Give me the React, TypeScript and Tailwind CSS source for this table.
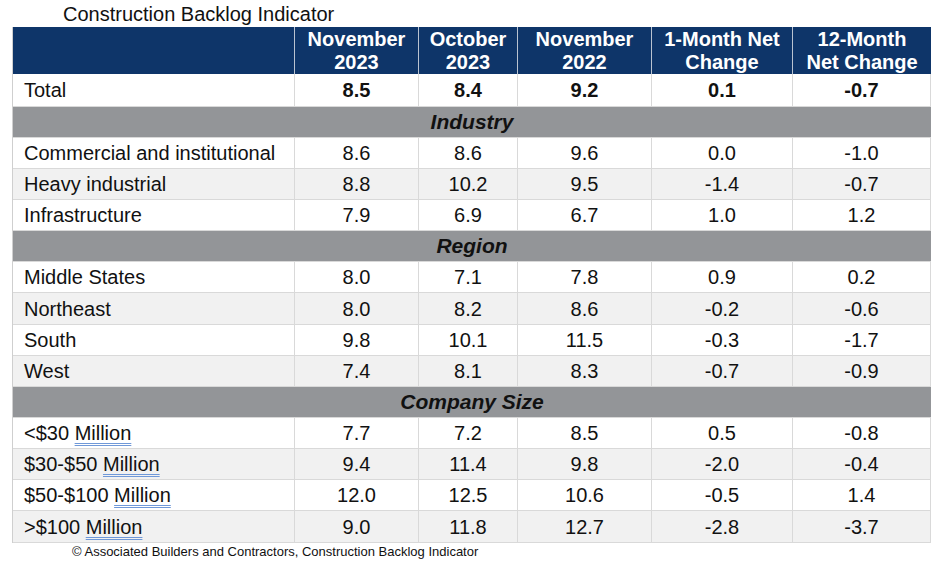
import React from "react";

type Row = { label: React.ReactNode; vals: string[]; h: number; alt?: boolean; bold?: boolean };

const W = ["w-[282px]", "w-[124px]", "w-[99px]", "w-[134px]", "w-[141px]", "w-[138px]"];

const M = (pre: string) => (
  <span>
    {pre}{" "}
    <span className="underline decoration-double decoration-[#6f98d8] decoration-1 underline-offset-[3px]">Million</span>
  </span>
);

function DataRow({ r }: { r: Row }) {
  const hCls = r.h === 33 ? "h-[33px]" : r.h === 32 ? "h-[32px]" : "h-[31px]";
  return (
    <div className={`flex ${hCls} ${r.alt ? "bg-[#f1f1f1]" : "bg-white"}`}>
      <div className={`${W[0]} shrink-0 border-r border-b border-[#d9d9d9] pl-[11px] flex items-center`}>{r.label}</div>
      {r.vals.map((v, i) => (
        <div
          key={i}
          className={`${W[i + 1]} shrink-0 border-r border-b border-[#d9d9d9] flex items-center justify-center ${r.bold ? "font-bold" : ""}`}
        >
          {v}
        </div>
      ))}
    </div>
  );
}

function Section({ title }: { title: string }) {
  return (
    <div className="h-[31px] bg-[#939598] border-b border-[#d9d9d9] flex items-center justify-center font-bold italic text-[21px] text-[#111]">
      {title}
    </div>
  );
}

export default function App() {
  const industry: Row[] = [
    { label: "Commercial and institutional", vals: ["8.6", "8.6", "9.6", "0.0", "-1.0"], h: 31 },
    { label: "Heavy industrial", vals: ["8.8", "10.2", "9.5", "-1.4", "-0.7"], h: 31, alt: true },
    { label: "Infrastructure", vals: ["7.9", "6.9", "6.7", "1.0", "1.2"], h: 31 },
  ];
  const region: Row[] = [
    { label: "Middle States", vals: ["8.0", "7.1", "7.8", "0.9", "0.2"], h: 31 },
    { label: "Northeast", vals: ["8.0", "8.2", "8.6", "-0.2", "-0.6"], h: 32, alt: true },
    { label: "South", vals: ["9.8", "10.1", "11.5", "-0.3", "-1.7"], h: 31 },
    { label: "West", vals: ["7.4", "8.1", "8.3", "-0.7", "-0.9"], h: 31, alt: true },
  ];
  const size: Row[] = [
    { label: M("<$30"), vals: ["7.7", "7.2", "8.5", "0.5", "-0.8"], h: 31 },
    { label: M("$30-$50"), vals: ["9.4", "11.4", "9.8", "-2.0", "-0.4"], h: 31, alt: true },
    { label: M("$50-$100"), vals: ["12.0", "12.5", "10.6", "-0.5", "1.4"], h: 31 },
    { label: M(">$100"), vals: ["9.0", "11.8", "12.7", "-2.8", "-3.7"], h: 32, alt: true },
  ];
  const headers = [
    ["November", "2023"],
    ["October", "2023"],
    ["November", "2022"],
    ["1-Month Net", "Change"],
    ["12-Month", "Net Change"],
  ];
  return (
    <div className="w-[936px] h-[573px] bg-white text-[#111] overflow-hidden" style={{ fontFamily: '"Liberation Sans", Arial, sans-serif' }}>
      <div className="h-[27px] pl-[63px] pt-[2px] text-[20px] leading-[24px]">Construction Backlog Indicator</div>
      <div className="ml-[12px] w-[919px] border-l border-[#cfcfcf] text-[20px] leading-[24px]">
        <div className="flex h-[47px] bg-[#0e3569] text-white font-bold">
          <div className={`${W[0]} shrink-0 border-r border-[#b9c3d1]`} />
          {headers.map((h, i) => (
            <div
              key={i}
              className={`${W[i + 1]} shrink-0 ${i < 4 ? "border-r border-[#b9c3d1]" : ""} flex flex-col items-center justify-center leading-[23px] pt-[1px]`}
            >
              <span>{h[0]}</span>
              <span>{h[1]}</span>
            </div>
          ))}
        </div>
        <DataRow r={{ label: "Total", vals: ["8.5", "8.4", "9.2", "0.1", "-0.7"], h: 33, bold: true }} />
        <Section title="Industry" />
        {industry.map((r, i) => (
          <DataRow key={i} r={r} />
        ))}
        <Section title="Region" />
        {region.map((r, i) => (
          <DataRow key={i} r={r} />
        ))}
        <Section title="Company Size" />
        {size.map((r, i) => (
          <DataRow key={i} r={r} />
        ))}
      </div>
      <div className="pl-[72px] pt-[1px] text-[13px] leading-[16px]">
        © Associated Builders and Contractors, Construction Backlog Indicator
      </div>
    </div>
  );
}
